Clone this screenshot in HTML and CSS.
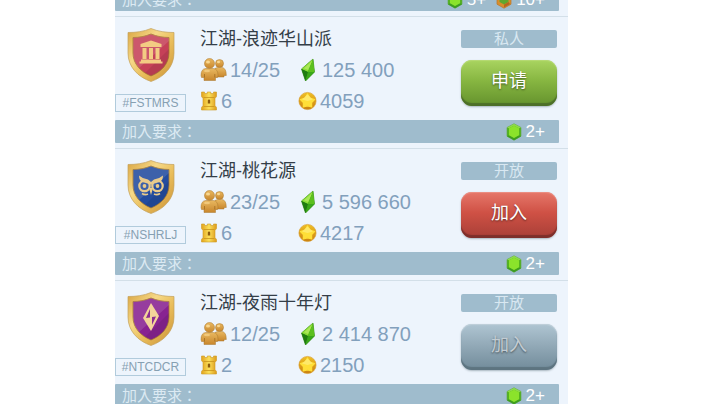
FILE: index.html
```html
<!DOCTYPE html>
<html lang="zh-CN">
  <head>
    <meta charset="UTF-8" />
    <meta name="viewport" content="width=device-width, initial-scale=1.0" />
    <title>江湖</title>
    <link rel="stylesheet" href="styles.css">
  </head>
  <body>
    <!-- shared icons -->
    <svg class="sprite" width="0" height="0" aria-hidden="true">
      <defs>
        <linearGradient id="gold" x1="0" y1="0" x2="1" y2="1">
          <stop offset="0" stop-color="#d9a441" />
          <stop offset="0.35" stop-color="#f6d987" />
          <stop offset="0.6" stop-color="#e9bd5a" />
          <stop offset="1" stop-color="#c98f35" />
        </linearGradient>
        <linearGradient id="people-fill" x1="0" y1="0" x2="0" y2="1">
          <stop offset="0" stop-color="#e9b860" />
          <stop offset="1" stop-color="#c8862c" />
        </linearGradient>
        <linearGradient id="tower-fill" x1="0" y1="0" x2="1" y2="0">
          <stop offset="0" stop-color="#e2a21c" />
          <stop offset="0.5" stop-color="#fbe05a" />
          <stop offset="1" stop-color="#dc9a1c" />
        </linearGradient>
        <linearGradient id="coin-fill" x1="0" y1="0" x2="0" y2="1">
          <stop offset="0" stop-color="#f0c025" />
          <stop offset="1" stop-color="#c9800f" />
        </linearGradient>
      </defs>

      <symbol id="shield" viewBox="0 0 48 54">
        <path d="M24 0.5C17 3.5 9 4.5 1 4.5V25C1 39 11 49 24 53.5C37 49 47 39 47 25V4.5C39 4.5 31 3.5 24 0.5Z" fill="url(#gold)" stroke="#c3a15c" stroke-width="0.7" />
        <path d="M24 6C18 8.5 12 9.5 6 9.5V25C6 36 14 44 24 48C34 44 42 36 42 25V9.5C36 9.5 30 8.5 24 6Z" fill="currentColor" stroke="#a67a34" stroke-width="0.8" />
        <path d="M24 6C18 8.5 12 9.5 6 9.5V25C6 31 8.5 36 12 40L42 13V9.5C36 9.5 30 8.5 24 6Z" fill="#fff" opacity="0.12" />
        <path d="M24 48C34 44 42 36 42 25V21L18 45Z" fill="#000" opacity="0.08" />
      </symbol>

      <symbol id="people" viewBox="0 0 27 24">
        <g fill="url(#people-fill)" stroke="#a8772c" stroke-width="0.5">
          <circle cx="19.5" cy="5.5" r="4" />
          <path d="M14 19V12.5Q14.500 9.500 18 9.500H21.500Q25 9.500 26 14L26.300 17.500H24V19Z" />
          <circle cx="9.5" cy="5.5" r="5" />
          <path d="M1 17.500Q1 11 5.500 10.500H13.500Q18 11 18 17.500L17.500 19.500H15.500V22.500H4V19.500H1.500Z" />
        </g>
        <path d="M4.500 16V19.500M14.800 16V19.500" stroke="#99651d" stroke-width="0.7" />
        <ellipse cx="8" cy="4" rx="2" ry="1.6" fill="#ffe2a0" opacity="0.8" />
        <ellipse cx="18.5" cy="4" rx="1.5" ry="1.2" fill="#ffe2a0" opacity="0.8" />
        <ellipse cx="7" cy="13" rx="3" ry="1.3" fill="#ffe2a0" opacity="0.5" />
      </symbol>

      <symbol id="tower" viewBox="0 0 18 20">
        <path d="M1.5 1H4.500V2.500H7.300V1H10.700V2.500H13.500V1H16.500V5.500L15 7.500V14.500L16.500 16.500V19H1.500V16.500L3 14.500V7.500L1.500 5.500Z" fill="url(#tower-fill)" stroke="#cf9a22" stroke-width="0.6" />
        <path d="M3.500 6.500H14.500M3.500 15.500H14.500" stroke="#c8931c" stroke-width="0.8" />
        <path d="M9 8.500Q10.200 8.500 10.200 9.800V12.500H7.800V9.800Q7.800 8.500 9 8.500Z" fill="#8d5c0c" />
      </symbol>

      <symbol id="crystal" viewBox="0 0 21 24">
        <path d="M15 1L16.500 14L7.500 23L3.500 11Z" fill="#359e16" stroke="#2d7c16" stroke-width="0.6" />
        <path d="M15 1L3.500 11L10 14Z" fill="#8bdc37" />
        <path d="M15 1L16.500 14L10 14Z" fill="#5cc01e" />
        <path d="M3.500 11L10 14L7.500 23Z" fill="#207c11" />
        <path d="M10 14L16.500 14L7.500 23Z" fill="#3aa719" />
        <path d="M14.200 3L6 10.200L10 12Z" fill="#c2ef70" opacity="0.6" />
      </symbol>

      <symbol id="coin" viewBox="0 0 19 20">
        <circle cx="9.5" cy="10" r="8.6" fill="url(#coin-fill)" stroke="#d99a28" stroke-width="0.6" />
        <path d="M9.500 3L12 7L16.500 8.500L13.600 11.700L13.700 16L9.500 14.800L5.300 16L5.400 11.700L2.500 8.500L7 7Z" fill="#ffdf38" stroke="#ffdf38" stroke-width="1.2" stroke-linejoin="round" />
        <path d="M9.500 3.500L4 8.500L9.500 10L14.800 8.500Z" fill="#fff08a" opacity="0.6" />
      </symbol>

      <symbol id="gem" viewBox="0 0 16 18">
        <path d="M8 0.8L15 4.500V13.200L8 17.200L1 13.200V4.500Z" fill="#55b31f" stroke="#5aa545" stroke-width="0.6" />
        <path d="M8 0.8L15 4.500L13 5.300L8 2.800L3 5.300L1 4.500Z" fill="#8ed94f" />
        <path d="M1 13.200L3 12.300L8 15L13 12.300L15 13.200L8 17.200Z" fill="#3e9d20" />
        <path d="M8 2.800L13 5.300V12.300L8 15L3 12.300V5.300Z" fill="#8be32b" />
      </symbol>

      <symbol id="gem-gold" viewBox="0 0 16 18">
        <path d="M8 0.8L15 4.500V13.200L8 17.200L1 13.200V4.500Z" fill="#d98e2c" stroke="#b9752a" stroke-width="0.7" />
        <path d="M8 3.500L12.500 6V11L8 13.500L3.500 11V6Z" fill="#5fa82e" />
        <path d="M8 13.500L12.500 11L14 13L8 16.500Z" fill="#b5661f" />
      </symbol>
    </svg>

    <main class="clubs">
      <div class="requirement">
        <span class="requirement-label" lang="zh-TW">加入要求：</span>
        <span class="need"><svg class="icon-gem"><use href="#gem" /></svg>5+</span>
        <span class="need"><svg class="icon-gem"><use href="#gem-gold" /></svg>10+</span>
      </div>

      <article class="club">
        <div class="club-body">
          <div class="emblem">
            <svg class="shield red" viewBox="0 0 48 54">
              <use href="#shield" />
              <g fill="#f3cc83">
                <path d="M24 12.5L34.500 16V19H13.500V16Z" />
                <path d="M15.500 20H19.500V31H15.500ZM22 20H26V31H22ZM28.500 20H32.500V31H28.500Z" />
                <path d="M14 31.500H34V33.500H35.500V35.500H12.500V33.500H14Z" />
              </g>
            </svg>
            <span class="tag">#FSTMRS</span>
          </div>
          <div class="info">
            <h2 class="name">江湖-浪迹华山派</h2>
            <span class="stat"><svg class="icon-people"><use href="#people" /></svg>14/25</span>
            <span class="stat"><svg class="icon-crystal"><use href="#crystal" /></svg>125 400</span>
            <span class="stat"><svg class="icon-tower"><use href="#tower" /></svg>6</span>
            <span class="stat"><svg class="icon-coin"><use href="#coin" /></svg>4059</span>
          </div>
          <div class="actions">
            <span class="access">私人</span>
            <button class="btn green" type="button">申请</button>
          </div>
        </div>
        <div class="requirement">
          <span class="requirement-label" lang="zh-TW">加入要求：</span>
          <span class="need"><svg class="icon-gem"><use href="#gem" /></svg>2+</span>
        </div>
      </article>

      <article class="club">
        <div class="club-body">
          <div class="emblem">
            <svg class="shield blue" viewBox="0 0 48 54">
              <use href="#shield" />
              <g fill="none" stroke="#e9ca8b">
                <path d="M12 15.5Q16 19 21 19.500L24 22L27 19.500Q32 19 36 15.500Q36 20.500 32.500 22L24 24.500L15.500 22Q12 20.500 12 15.500Z" fill="#e9ca8b" stroke="none" />
                <circle cx="17.5" cy="26" r="5.2" stroke-width="2.2" />
                <circle cx="30.500" cy="26" r="5.2" stroke-width="2.2" />
                <path d="M22 28L24 35L26 28Z" fill="#e9ca8b" stroke="none" />
                <path d="M15 33.500Q18 35.500 21 34M33 33.500Q30 35.500 27 34" stroke-width="1.6" />
              </g>
              <circle cx="17.500" cy="26" r="1.9" fill="#e9ca8b" />
              <circle cx="30.500" cy="26" r="1.9" fill="#e9ca8b" />
            </svg>
            <span class="tag">#NSHRLJ</span>
          </div>
          <div class="info">
            <h2 class="name">江湖-桃花源</h2>
            <span class="stat"><svg class="icon-people"><use href="#people" /></svg>23/25</span>
            <span class="stat"><svg class="icon-crystal"><use href="#crystal" /></svg>5 596 660</span>
            <span class="stat"><svg class="icon-tower"><use href="#tower" /></svg>6</span>
            <span class="stat"><svg class="icon-coin"><use href="#coin" /></svg>4217</span>
          </div>
          <div class="actions">
            <span class="access">开放</span>
            <button class="btn coral" type="button">加入</button>
          </div>
        </div>
        <div class="requirement">
          <span class="requirement-label" lang="zh-TW">加入要求：</span>
          <span class="need"><svg class="icon-gem"><use href="#gem" /></svg>2+</span>
        </div>
      </article>

      <article class="club">
        <div class="club-body">
          <div class="emblem">
            <svg class="shield purple" viewBox="0 0 48 54">
              <use href="#shield" />
              <path d="M24 11L32 24L24 39L16 26Z" fill="#f3d49a" />
              <path d="M23 17V25.500L19 26ZM25 33V25L29 24.500Z" fill="#8b2d92" />
            </svg>
            <span class="tag">#NTCDCR</span>
          </div>
          <div class="info">
            <h2 class="name">江湖-夜雨十年灯</h2>
            <span class="stat"><svg class="icon-people"><use href="#people" /></svg>12/25</span>
            <span class="stat"><svg class="icon-crystal"><use href="#crystal" /></svg>2 414 870</span>
            <span class="stat"><svg class="icon-tower"><use href="#tower" /></svg>2</span>
            <span class="stat"><svg class="icon-coin"><use href="#coin" /></svg>2150</span>
          </div>
          <div class="actions">
            <span class="access">开放</span>
            <button class="btn" type="button" disabled>加入</button>
          </div>
        </div>
        <div class="requirement">
          <span class="requirement-label" lang="zh-TW">加入要求：</span>
          <span class="need"><svg class="icon-gem"><use href="#gem" /></svg>2+</span>
        </div>
      </article>
    </main>
  </body>
</html>
```
FILE: styles.css
```css
* {
  box-sizing: border-box;
}

body {
  margin: 0;
  padding: 0 152px 0 115px;
  height: 100vh;
  overflow: hidden;
  background-color: #fff;
  font-family: "Liberation Sans", "Noto Sans CJK SC", sans-serif;
}

.sprite {
  position: absolute;
}

/* the list is scrolled a little, so its first row is cut off */
.clubs {
  margin-top: -12px;
  background-color: #edf4fc;
}

.club {
  margin-top: 5px;
  border-top: 1px solid #d3dfe8;
}

.club-body {
  display: grid;
  grid-template-columns: 71px 1fr 96px;
  column-gap: 14px;
  padding: 6px 11px 4px 0;
}

.emblem {
  display: flex;
  flex-direction: column;
  align-items: center;
  gap: 12px;
  padding-top: 5px;
}

.shield {
  width: 48px;
  height: 54px;
}

.red {
  color: #c54158;
}

.blue {
  color: #234c9f;
}

.purple {
  color: #882391;
}

.tag {
  width: 100%;
  border: 1px solid #b1cbdc;
  line-height: 16px;
  font-size: 12px;
  text-align: center;
  color: #86a0b2;
}

.info {
  display: grid;
  grid-template-columns: 98px 1fr;
  grid-auto-rows: 31px;
  align-items: center;
}

.name {
  grid-column: 1 / 3;
  margin: 0;
  font-size: 18px;
  font-weight: 400;
  line-height: 30px;
  color: #343e48;
}

.stat {
  display: flex;
  align-items: center;
  gap: 3px;
  font-size: 20px;
  line-height: 30px;
  white-space: nowrap;
  color: #82a0bc;
}

.stat svg,
.need svg {
  flex: none;
}

.icon-people {
  width: 27px;
  height: 24px;
}

.icon-crystal {
  width: 21px;
  height: 24px;
}

.icon-tower {
  width: 18px;
  height: 20px;
}

.icon-coin {
  width: 19px;
  height: 20px;
}

.icon-gem {
  width: 16px;
  height: 18px;
}

.actions {
  display: flex;
  flex-direction: column;
  gap: 12px;
  padding-top: 7px;
}

.access {
  height: 18px;
  border-radius: 2px;
  background-color: #9fbccd;
  font-size: 15px;
  line-height: 18px;
  text-align: center;
  color: #d9e8f2;
}

.btn {
  height: 46px;
  padding: 0 0 4px;
  border: none;
  border-radius: 11px;
  background: linear-gradient(#afc5d2, #93aab8 45%, #718b9a);
  box-shadow: inset 0 -3px 1px #5d7480, inset 0 1px 1px #c0d0da, 0 1px 2px #a9b6bf;
  font-family: inherit;
  font-size: 18px;
  font-weight: 400;
  line-height: 30px;
  color: #c2ccd3;
  text-shadow: 0 1px 2px rgba(0, 0, 0, 0.5);
}

.green {
  background: linear-gradient(#a9d460, #87b641 45%, #64922d);
  box-shadow: inset 0 -3px 1px #4d6f29, inset 0 1px 1px #b6da76, 0 1px 2px #a9b6bf;
  color: #fff;
}

.coral {
  background: linear-gradient(#e6776a, #cf5145 45%, #a83f37);
  box-shadow: inset 0 -3px 1px #7d2f2b, inset 0 1px 1px #ec9185, 0 1px 2px #a9b6bf;
  color: #fff;
}

.requirement {
  display: flex;
  align-items: center;
  gap: 10px;
  height: 23px;
  margin-right: 9px;
  padding: 0 14px 0 7px;
  border-radius: 1px;
  background-color: #9fbccd;
}

.requirement-label {
  margin-right: auto;
  font-family: "Liberation Sans", "Noto Sans CJK TC", sans-serif;
  font-size: 15px;
  line-height: 22px;
  color: #dceaf3;
}

.need {
  display: flex;
  align-items: center;
  gap: 4px;
  font-size: 17px;
  color: #fff;
}
```
